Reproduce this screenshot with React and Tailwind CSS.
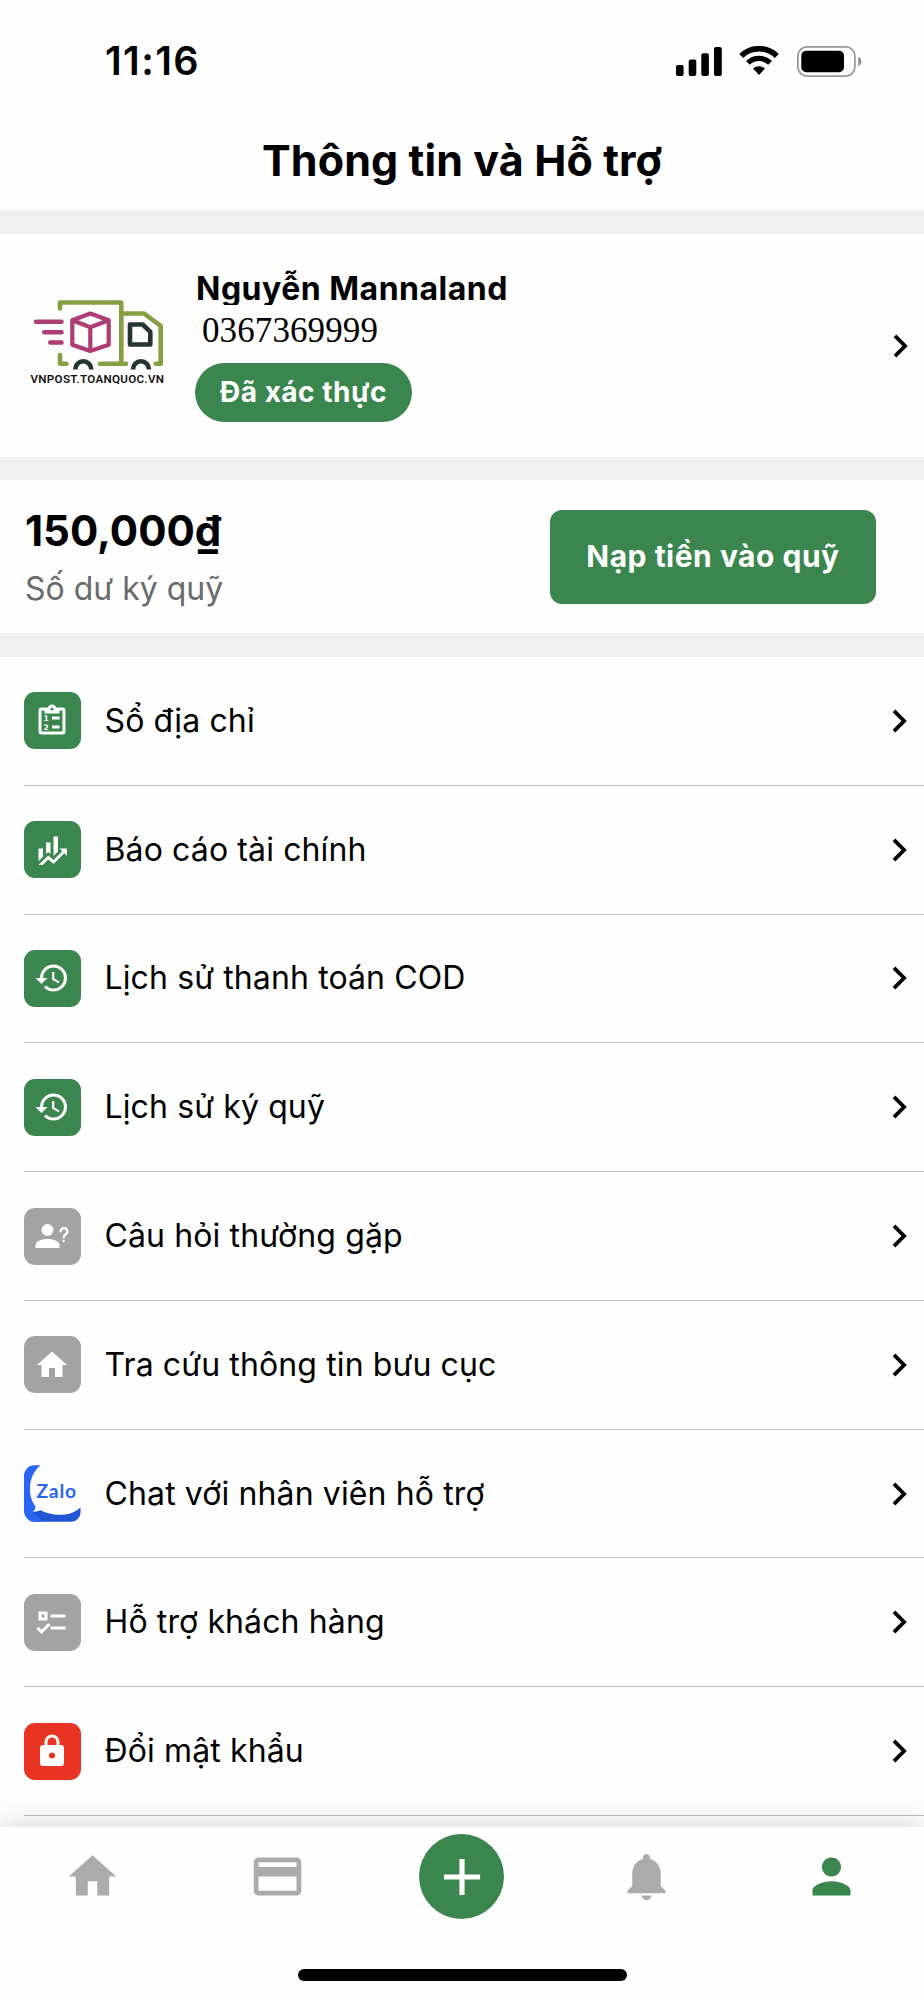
import { MdHome, MdPayment, MdAdd, MdNotifications, MdPerson } from 'react-icons/md';

const SignalIcon = () => (
  <svg className="w-[46px] h-[29px]" viewBox="0 0 46 29">
    <rect x="0" y="18" width="7.6" height="11" rx="2" />
    <rect x="12.7" y="12.5" width="7.6" height="16.5" rx="2" />
    <rect x="25.3" y="6.3" width="7.6" height="22.7" rx="2" />
    <rect x="38" y="0" width="7.8" height="29" rx="2" />
  </svg>
);

const WifiIcon = () => (
  <svg className="w-10 h-[30px]" viewBox="0 0 40 30">
    <path d="M2.2 9.9a25.5 25.5 0 0 1 35.6 0" fill="none" stroke="#000" strokeWidth="5.6" />
    <path d="M8.9 16.9a16 16 0 0 1 22.2 0" fill="none" stroke="#000" strokeWidth="5.4" />
    <path d="M14 22.6a9 9 0 0 1 12 0L20 29z" />
  </svg>
);

const BatteryIcon = () => (
  <svg className="w-[65px] h-[31px]" viewBox="0 0 65 31">
    <rect x="0.9" y="0.9" width="57" height="29.2" rx="9" fill="none" stroke="#999" strokeWidth="1.8" />
    <rect x="4.3" y="4.7" width="42.7" height="21.6" rx="5" />
    <path d="M61.3 10.8q3 1.4 3 4.7t-3 4.7z" fill="#888" />
  </svg>
);

const TruckLogo = () => (
  <svg className="w-[140px] h-[112px]" viewBox="0 0 140 112" fill="none" strokeLinecap="round" strokeLinejoin="round">
    <g stroke="#859f43" strokeWidth="4.6">
      <path d="M32 18.5V12.5h61.3v61M32 65v8.800h6.500M72 73.800h26" />
      <path d="M94 23.500h22l16.700 12.300v38h-5" />
    </g>
    <g stroke="#ad3d74" strokeWidth="4.6">
      <path d="M8 31.8h25.500M16.300 42.200h17.200M22.300 52.500h11.200" />
      <path d="M62.3 23.5 80.7 30.2v24.6l-18.4 6.2-18-6.2V30.2zM44.3 30.2l18 7 18.4-7M62.3 37.2v23" strokeWidth="4.2" />
    </g>
    <g stroke="#263433" strokeWidth="4.6">
      <path d="M102 34.5h12.7l7.6 7.3v12.7H102z" />
      <path d="M47.3 79.500a8 8.200 0 0 1 16 0M105 79.500a8 8.200 0 0 1 16 0" strokeLinecap="butt" />
    </g>
    <text x="2.500" y="92.500" textLength="133.500" fill="#111" fontFamily="Roboto, sans-serif" fontWeight="600" fontSize="11.600">
      VNPOST.TOANQUOC.VN
    </text>
  </svg>
);

const ZaloIcon = () => (
  <svg className="w-[56.5px] h-[57px] shrink-0 rounded-[11px]" viewBox="0 0 57 57">
    <path d="M0 0H16.5C8.5 7.5 6 15 6 24.5c0 7 2 12.5 5.3 16.5.8 2.5-.8 4.5-2.5 5.8L16 57H0z" fill="#2a66f4" />
    <path d="M8.8 46.8c3.2.2 5.6-.3 8-1.3 12 6.5 30 6.5 40.2-3V57H12z" fill="#2356d5" />
    <path d="M8 46.5 19 57H6z" fill="#2a66f4" />
    <text x="12.5" y="32.9" textLength="40" fill="#2a66f4" fontFamily="Lato, sans-serif" fontWeight="700" fontSize="19.4">
      Zalo
    </text>
  </svg>
);

const ClipboardIcon = () => (
  <svg className="w-9 h-9" viewBox="0 0 24 24" fill="currentColor">
    <path d="M19,3H14.82C14.4,1.84 13.3,1 12,1C10.7,1 9.6,1.84 9.18,3H5A2,2 0 0,0 3,5V19A2,2 0 0,0 5,21H19A2,2 0 0,0 21,19V5A2,2 0 0,0 19,3M12,3A1,1 0 0,1 13,4A1,1 0 0,1 12,5A1,1 0 0,1 11,4A1,1 0 0,1 12,3M7,7H17V5H19V19H5V5H7V7M12,17V15H17V17H12M12,11V9H17V11H12" />
    <text x="6.3" y="12" fontFamily="DejaVu Sans, sans-serif" fontWeight="700" fontSize="5">1</text>
    <text x="6.3" y="18" fontFamily="DejaVu Sans, sans-serif" fontWeight="700" fontSize="5">2</text>
  </svg>
);

const Icon = ({ d }) => (
  <svg className="w-9 h-9" viewBox="0 0 24 24" fill="currentColor">
    <path d={d} />
  </svg>
);

const ChevronIcon = () => (
  <svg className="w-[17px] h-[26px] shrink-0" viewBox="0 0 17 26" fill="none" stroke="#000" strokeWidth="3.8">
    <path d="M3 2.9 13.1 13 3 23.1" />
  </svg>
);

const FINANCE = 'M6,16.5L3,19.44V11H6M11,14.66L9.43,13.32L8,14.64V7H11M16,13L13,16V3H16M18.81,12.81L17,11H22V16L20.21,14.21L13,21.36L9.53,18.34L5.75,22H3L9.47,15.66L13,18.64';
const HISTORY = 'M13.5,8H12V13L16.28,15.54L17,14.33L13.5,12.25V8M13,3A9,9 0 0,0 4,12H1L4.96,16.03L9,12H6A7,7 0 0,1 13,5A7,7 0 0,1 20,12A7,7 0 0,1 13,19C11.07,19 9.32,18.21 8.06,16.94L6.64,18.36C8.27,20 10.5,21 13,21A9,9 0 0,0 22,12A9,9 0 0,0 13,3';
const QUESTION = 'M13,8A4,4 0 0,1 9,12A4,4 0 0,1 5,8A4,4 0 0,1 9,4A4,4 0 0,1 13,8M17,18V20H1V18C1,15.58 4.58,14 9,14C13.42,14 17,15.58 17,18M20.5,14.5V16H19V14.5H20.5M18.5,9.5H17V9A3,3 0 0,1 20,6A3,3 0 0,1 23,9C23,9.97 22.5,10.88 21.71,11.41L21.41,11.6C20.84,12 20.5,12.61 20.5,13.3V13.5H19V13.3C19,12.11 19.6,11 20.59,10.35L20.88,10.16C21.27,9.9 21.5,9.47 21.5,9A1.5,1.5 0 0,0 20,7.5A1.5,1.5 0 0,0 18.5,9V9.5Z';
const HOME = 'M10,20V14H14V20H19V12H22L12,3L2,12H5V20H10Z';
const CHECKS = 'M3,5H9V11H3V5M5,7V9H7V7H5M11,7H21V9H11V7M11,15H21V17H11V15M5,20L1.5,16.5L2.91,15.09L5,17.17L9.59,12.59L11,14L5,20Z';
const LOCK = 'M12,17A2,2 0 0,0 14,15C14,13.89 13.1,13 12,13A2,2 0 0,0 10,15A2,2 0 0,0 12,17M18,8A2,2 0 0,1 20,10V20A2,2 0 0,1 18,22H6A2,2 0 0,1 4,20V10C4,8.89 4.9,8 6,8H7V6A5,5 0 0,1 12,1A5,5 0 0,1 17,6V8H18M12,3A3,3 0 0,0 9,6V8H15V6A3,3 0 0,0 12,3Z';

const menuItems = [
  { label: 'Sổ địa chỉ', icon: <ClipboardIcon />, color: 'bg-[#3b864e]' },
  { label: 'Báo cáo tài chính', icon: <Icon d={FINANCE} />, color: 'bg-[#3b864e]' },
  { label: 'Lịch sử thanh toán COD', icon: <Icon d={HISTORY} />, color: 'bg-[#3b864e]' },
  { label: 'Lịch sử ký quỹ', icon: <Icon d={HISTORY} />, color: 'bg-[#3b864e]' },
  { label: 'Câu hỏi thường gặp', icon: <Icon d={QUESTION} />, color: 'bg-[#a3a3a3]' },
  { label: 'Tra cứu thông tin bưu cục', icon: <Icon d={HOME} />, color: 'bg-[#a3a3a3]' },
  { label: 'Chat với nhân viên hỗ trợ', zalo: true },
  { label: 'Hỗ trợ khách hàng', icon: <Icon d={CHECKS} />, color: 'bg-[#a3a3a3]' },
  { label: 'Đổi mật khẩu', icon: <Icon d={LOCK} />, color: 'bg-[#e93323]' },
];

const MenuRow = ({ item }) => (
  <button className="ml-6 flex flex-1 items-center border-b-[1.5px] border-[#bfbfc1] pr-4 text-left">
    {item.zalo ? (
      <ZaloIcon />
    ) : (
      <span className={`flex w-[56.5px] h-[57px] shrink-0 items-center justify-center rounded-[11px] pr-px text-white ${item.color}`}>
        {item.icon}
      </span>
    )}
    <span className="ml-6 flex-1 whitespace-nowrap text-[32px] leading-10 tracking-[0.12px]">{item.label}</span>
    <ChevronIcon />
  </button>
);

const App = () => {
  return (
    <div className="flex h-[2000px] w-[924px] flex-col overflow-hidden bg-[#fefefe] font-['Inter','Liberation_Sans',sans-serif] text-black">
      {/* Status bar */}
      <div className="flex h-[122px] items-center justify-between pl-[105px] pr-[62px]">
        <span className="pt-[2px] text-[39.5px] font-semibold leading-none tracking-[1.4px]">11:16</span>
        <div className="flex items-center">
          <SignalIcon />
          <span className="ml-[17px]"><WifiIcon /></span>
          <span className="ml-[18px]"><BatteryIcon /></span>
        </div>
      </div>

      <header className="flex h-[88px] justify-center pt-[12px]">
        <h1 className="whitespace-nowrap text-[43px] font-bold leading-[52px] tracking-[0.1px]">Thông tin và Hỗ trợ</h1>
      </header>

      {/* Profile */}
      <section className="flex h-[247px] items-center border-t-[24px] border-[#efefef] pl-7 pr-[15px]">
        <TruckLogo />
        <div className="ml-[27px] flex flex-1 flex-col items-start">
          <div className="h-[36px] overflow-hidden pl-px">
            <p className="whitespace-nowrap text-[32px] font-bold leading-[39px] tracking-[0.5px]">Nguyễn Mannaland</p>
          </div>
          <p className="ml-[7px] mt-[5.5px] font-['Liberation_Serif',serif] text-[35px] leading-[40px] tracking-[0.1px]">0367369999</p>
          <span className="mt-3 flex h-[59px] w-[217px] items-center justify-center rounded-full bg-[#3b864e] text-[28px] font-bold tracking-[0.5px] text-white">
            Đã xác thực
          </span>
        </div>
        <ChevronIcon />
      </section>

      {/* Balance */}
      <section className="flex h-[176px] items-center justify-between border-t-[23px] border-[#efefef] pl-[25px] pr-12">
        <div>
          <p className="text-[42px] font-bold leading-[52px]">150,000₫</p>
          <p className="mt-3 text-[32px] leading-10 text-[#6a6a6a]">Số dư ký quỹ</p>
        </div>
        <button className="h-[94px] w-[326px] rounded-xl bg-[#3b864e] text-[30px] font-bold tracking-[0.5px] text-white">
          Nạp tiền vào quỹ
        </button>
      </section>

      {/* Menu */}
      <section className="flex h-[1183px] flex-col border-t-[24px] border-[#efefef]">
        {menuItems.map((item) => (
          <MenuRow key={item.label} item={item} />
        ))}
      </section>
      <div className="h-[11px]" />

      {/* Tab bar */}
      <nav className="relative flex h-[173px] flex-col items-center justify-between bg-[#fefefe] pb-[19px] shadow-[0_0_28px_rgba(0,0,0,0.18)]">
        <div className="grid w-full grid-cols-5 items-center justify-items-center pt-[7px] text-[57px] text-[#ababab]">
          <MdHome />
          <MdPayment />
          <span className="flex h-[85px] w-[85px] items-center justify-center rounded-full bg-[#3b864e] text-[62px] text-white">
            <MdAdd />
          </span>
          <MdNotifications />
          <MdPerson className="text-[#3b864e]" />
        </div>
        <div className="h-3 w-[329px] rounded-full bg-black" />
      </nav>
    </div>
  );
};

export default App;
